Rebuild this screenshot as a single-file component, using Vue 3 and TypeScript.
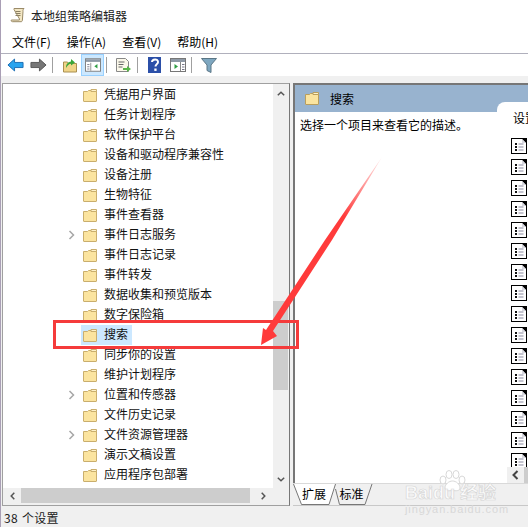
<script setup lang="ts">
interface TreeRow { label: string; expandable?: boolean; selected?: boolean }
const menus: string[] = ['文件(F)', '操作(A)', '查看(V)', '帮助(H)']
const rows: TreeRow[] = [
  { label: '凭据用户界面' },
  { label: '任务计划程序' },
  { label: '软件保护平台' },
  { label: '设备和驱动程序兼容性' },
  { label: '设备注册' },
  { label: '生物特征' },
  { label: '事件查看器' },
  { label: '事件日志服务', expandable: true },
  { label: '事件日志记录' },
  { label: '事件转发' },
  { label: '数据收集和预览版本' },
  { label: '数字保险箱' },
  { label: '搜索', selected: true },
  { label: '同步你的设置' },
  { label: '维护计划程序' },
  { label: '位置和传感器', expandable: true },
  { label: '文件历史记录' },
  { label: '文件资源管理器', expandable: true },
  { label: '演示文稿设置' },
  { label: '应用程序包部署' },
]
const settingIcons: number[] = Array.from({ length: 17 }, (_, i) => i)
</script>

<template>
  <div class="window">
    <header class="title">
      <svg class="title-icon" width="16" height="16" viewBox="0 0 16 16">
        <path d="M4 1.500h10c-1 1-1.200 2-1 3l-.6 8.500c0 1.200-.6 1.700-1.400 1.700H2.500c-1 0-1.500-.7-1.200-1.700h8l.2-1L4 2.500z" fill="#f3e7c4" stroke="#9a8a68" />
        <path d="M5.500 4.500h5M5.500 6.500h5M5.500 8.500h5" stroke="#8c8064" />
      </svg>
      <span>本地组策略编辑器</span>
    </header>

    <nav class="menu">
      <span v-for="m in menus" :key="m" class="menu-item">{{ m }}</span>
    </nav>

    <div class="toolbar">
      <button class="tool tool-nav">
        <svg width="17" height="14" viewBox="0 0 18 14"><path d="M1 7l7-6.300v3.600h9v5.400H8v3.600z" fill="#29a4ef" stroke="#1b6bb0" /></svg>
      </button>
      <button class="tool tool-nav">
        <svg width="17" height="14" viewBox="0 0 18 14"><path d="M17 7l-7-6.300v3.600H1v5.400h9v3.600z" fill="#777" stroke="#555" /></svg>
      </button>
      <i class="sep"></i>
      <button class="tool">
        <svg width="16" height="16" viewBox="0 0 16 16"><path d="M1.500 5h4l1 1.500h8v8.500h-13z" fill="#f0d488" stroke="#a98f50" /><path d="M4 11c0-4 2-6 5-6.500V2l4 3.500-4 3V6.500C7 7 5.500 8.500 4 11z" fill="#3aa63a" /></svg>
      </button>
      <button class="tool tool-active">
        <svg width="16" height="14" viewBox="0 0 18 15"><rect x=".5" y=".5" width="17" height="14" fill="#fff" stroke="#777" /><rect x="1" y="1" width="16" height="3" fill="#8e99a6" /><path d="M6.500 5v9" stroke="#888" /><path d="M2.500 7h2.500M2.500 9.500h2.500M2.500 12h2.500" stroke="#778" /><path d="M14 6.500v5l-3.500-2.500z" fill="#2f9e44" /></svg>
      </button>
      <i class="sep"></i>
      <button class="tool">
        <svg width="17" height="17" viewBox="0 0 17 17"><path d="M1.500 1.500h9l3 3v10h-12z" fill="#fbf8ea" stroke="#888" /><path d="M3.500 5h6M3.500 7.500h5M3.500 10h4" stroke="#666" /><path d="M8 11h4V9l4 3-4 3v-2H8z" fill="#58b548" /></svg>
      </button>
      <i class="sep"></i>
      <button class="tool">
        <svg width="14" height="16" viewBox="0 0 14 16"><rect width="13" height="16" fill="#2b4fa8" /><path d="M4 5c.2-3.500 6-3.500 6 0 0 2-2.500 2.300-2.500 4.500" fill="none" stroke="#fff" stroke-width="2" /><rect x="6.300" y="11.500" width="2.300" height="2.400" fill="#fff" /></svg>
      </button>
      <button class="tool">
        <svg width="16" height="14" viewBox="0 0 16 14"><rect x=".5" y=".5" width="15" height="13" fill="#fff" stroke="#777" /><rect x="1" y="1" width="14" height="3" fill="#8e99a6" /><path d="M10.500 4v9" stroke="#888" /><path d="M12 6.500h2.500M12 9h2.500M12 11.500h2.500" stroke="#778" /><path d="M4.500 6v5l3.500-2.500z" fill="#2f9e44" /></svg>
      </button>
      <i class="sep"></i>
      <button class="tool">
        <svg width="16" height="15" viewBox="0 0 16 15"><path d="M.5.500h15L10 7v7.500L6 12.500V7z" fill="#7ea7c0" stroke="#5b7686" /></svg>
      </button>
    </div>

    <main class="body">
      <section class="tree-pane">
        <div class="tree-top">
          <ul class="tree">
            <li v-for="row in rows" :key="row.label" class="tree-row">
              <span class="chevron">
                <svg v-if="row.expandable" width="7" height="10" viewBox="0 0 7 10"><path d="M1.500 1l4 4-4 4" fill="none" stroke="#a6a6a6" stroke-width="1.500" /></svg>
              </span>
              <span class="row-hit" :class="{ selected: row.selected }">
                <svg class="folder" width="14" height="13" viewBox="0 0 14 13"><path d="M.5 2.500V12a.5.500 0 0 0 .5.500h12a.5.500 0 0 0 .5-.5V1.500h-8l-1 1z" fill="#fbe49f" stroke="#c9ae6d" /><path d="M8 .5h5.500v2H8z" fill="#fff3c8" stroke="#c9ae6d" /></svg>
                <span class="row-text">{{ row.label }}</span>
              </span>
            </li>
          </ul>
          <div class="vscroll">
            <svg class="arrow" width="8" height="5" viewBox="0 0 8 5"><path d="M.8 4.300L4 1.200l3.200 3.100" fill="none" stroke="#555" stroke-width="1.500" /></svg>
            <div class="vtrack"><div class="vthumb"></div></div>
            <svg class="arrow" width="8" height="5" viewBox="0 0 8 5"><path d="M.8.700L4 3.800 7.200.700" fill="none" stroke="#555" stroke-width="1.500" /></svg>
          </div>
        </div>
        <div class="hscroll">
          <svg width="5" height="8" viewBox="0 0 5 8"><path d="M4.300.8L1.200 4l3.100 3.200" fill="none" stroke="#555" stroke-width="1.500" /></svg>
          <div class="htrack"><div class="hthumb"></div></div>
          <svg width="5" height="8" viewBox="0 0 5 8"><path d="M.7.800L3.800 4 .7 7.200" fill="none" stroke="#555" stroke-width="1.500" /></svg>
        </div>
      </section>

      <section class="detail-col">
        <div class="detail">
          <div class="detail-head">
            <svg width="14" height="13" viewBox="0 0 14 13"><path d="M.5 2.500V12a.5.500 0 0 0 .5.500h12a.5.500 0 0 0 .5-.5V1.500h-8l-1 1z" fill="#fbe49f" stroke="#b99e5d" /><path d="M8 .5h5.500v2H8z" fill="#fff3c8" stroke="#b99e5d" /></svg>
            <span>搜索</span>
          </div>
          <div class="detail-main">
            <p class="describe">选择一个项目来查看它的描述。</p>
            <div class="settings">
              <div class="settings-head">设置</div>
              <div class="settings-list">
                <svg v-for="n in settingIcons" :key="n" class="set-icon" width="16" height="16" viewBox="0 0 16 16">
                  <rect width="16" height="16" fill="#000" />
                  <path d="M1 1h10l4 4v10H1z" fill="#fff" />
                  <path d="M11 1v4h4z" fill="#d8d8e0" />
                  <path d="M4 5h2v2H4zM4 8h2v2H4zM4 11h2v2H4z" fill="#111" />
                  <path d="M7.500 6h5M7.500 9h5M7.500 12h5" stroke="#8a8aa0" />
                </svg>
              </div>
              <div class="settings-scroll">
                <svg width="7" height="10" viewBox="0 0 7 10"><path d="M5.500 1L1.500 5l4 4" fill="none" stroke="#444" stroke-width="2" /></svg>
                <i></i>
              </div>
            </div>
          </div>
        </div>
        <div class="tabs">
          <span class="tab tab-active">
            <svg class="tab-shape" width="43" height="21" viewBox="0 0 43 21"><path d="M.5 0L8.500 20.500H36L42.500 0" fill="#fff" stroke="#777" /></svg>
            <span class="tab-label">扩展</span>
          </span>
          <span class="tab tab-second">
            <svg class="tab-shape" width="38" height="21" viewBox="0 0 38 21"><path d="M.5 5L4.500 20.500H30L37 0" fill="#f0f0f0" stroke="#777" /></svg>
            <span class="tab-label">标准</span>
          </span>
        </div>
      </section>
    </main>

    <footer class="status">38 个设置</footer>

    <div class="mark-box"></div>
    <svg class="mark-arrow" width="130" height="195" viewBox="0 0 130 195">
      <defs>
        <linearGradient id="fade" gradientUnits="userSpaceOnUse" x1="124" y1="1" x2="85" y2="60">
          <stop offset="0" stop-color="#ff3b3b" stop-opacity="0.1" />
          <stop offset="1" stop-color="#ff3b3b" />
        </linearGradient>
      </defs>
      <path d="M124 1L74 84 15 175 19 180 3 189 5 172 8 174 67 84z" fill="url(#fade)" />
    </svg>
    <div class="watermark">
      <svg class="paw" width="30" height="22" viewBox="0 0 30 22" fill="#fff" stroke="#d8d8d8">
        <ellipse cx="6" cy="10" rx="3" ry="4" />
        <ellipse cx="12" cy="4.500" rx="3" ry="4" />
        <ellipse cx="19" cy="4.500" rx="3" ry="4" />
        <ellipse cx="25" cy="10" rx="3" ry="4" />
        <path d="M8 18c0-4 4-7 7.500-7s7.500 3 7.500 7c0 3-4 3-7.500 2.500C12 21 8 21 8 18z" />
      </svg>
      <span class="wm-big">Baidu 经验</span>
      <span class="wm-small">jingyan.baidu.com</span>
    </div>
  </div>
</template>

<style scoped>
.window {
  position: relative;
  width: 528px;
  height: 527px;
  display: flex;
  flex-direction: column;
  overflow: hidden;
  background: #f0f0f0;
  color: #000;
  font-family: "Noto Sans CJK SC", "Liberation Sans", sans-serif;
  font-size: 12px;
}
.window::before {
  content: "";
  position: absolute;
  left: 0;
  top: 0;
  bottom: 0;
  width: 1px;
  background: #a99fb5;
}
.title {
  height: 30px;
  background: #fff;
  display: flex;
  align-items: center;
  gap: 5px;
  padding-left: 10px;
  font-size: 12px;
  color: #222;
  box-sizing: border-box;
}
.menu {
  height: 24px;
  box-sizing: border-box;
  background: #fff;
  border-bottom: 1px solid #b0b0bc;
  display: flex;
  align-items: center;
  padding-left: 12px;
  gap: 16px;
}
.menu-item { white-space: nowrap; }
.toolbar {
  height: 22px;
  background: #fff;
  display: flex;
  align-items: center;
  padding-left: 4px;
}
.tool {
  appearance: none;
  border: 1px solid transparent;
  background: none;
  padding: 0;
  width: 23px;
  height: 22px;
  display: flex;
  align-items: center;
  justify-content: center;
  margin: 0;
}
.tool-active {
  background: #cce8ff;
  border-color: #99d1ff;
}
.sep {
  width: 1px;
  height: 16px;
  background: #a0a0a0;
  margin: 0 5px 0 2px;
}
.body {
  flex: 1;
  min-height: 0;
  display: flex;
  padding-top: 7px;
  background: #f0f0f0;
}
.tree-pane {
  margin-left: 2px;
  width: 288px;
  flex: none;
  box-sizing: border-box;
  border: 1px solid #a0a0a0;
  border-right-color: #777;
  display: flex;
  flex-direction: column;
  background: #f0f0f0;
}
.tree-top { flex: 1; min-height: 0; display: flex; }
.tree {
  flex: 1;
  list-style: none;
  margin: 0;
  padding: 1px 0 0;
  background: #fff;
  overflow: hidden;
}
.tree-row {
  height: 20px;
  display: flex;
  align-items: center;
  padding-left: 65px;
}
.chevron {
  width: 13px;
  flex: none;
  display: flex;
  align-items: center;
}
.row-hit {
  display: flex;
  align-items: center;
  height: 20px;
  padding: 0 4px 0 2px;
  gap: 7px;
  box-sizing: border-box;
}
.row-hit.selected { background: #cce8ff; width: 51px; }
.row-text { white-space: nowrap; color: #111; line-height: 18px; padding-bottom: 2px; }
.vscroll {
  width: 16px;
  flex: none;
  display: flex;
  flex-direction: column;
  align-items: center;
  padding: 7px 0 6px;
  box-sizing: border-box;
}
.vtrack { flex: 1; width: 100%; padding-top: 205px; box-sizing: border-box; }
.vthumb { height: 89px; background: #cdcdcd; width: 15px; }
.hscroll {
  height: 17px;
  flex: none;
  display: flex;
  align-items: center;
  padding: 0 23px 2px 7px;
  box-sizing: border-box;
}
.htrack { flex: 1; height: 15px; padding-left: 6px; }
.hthumb { height: 100%; background: #cdcdcd; width: 229px; }
.detail-col {
  flex: 1;
  min-width: 0;
  margin-left: 3px;
  display: flex;
  flex-direction: column;
}
.detail {
  height: 400px;
  flex: none;
  box-sizing: border-box;
  border-left: 2px solid #777;
  border-top: 2px solid #777;
  background: #fff;
  display: flex;
  flex-direction: column;
}
.detail-head {
  height: 27px;
  flex: none;
  background: #98b3cf;
  display: flex;
  align-items: center;
  gap: 11px;
  padding-left: 10px;
  font-size: 12px;
}
.detail-main { flex: 1; min-height: 0; display: flex; }
.describe {
  margin: 0;
  padding: 4px 0 0 5px;
  width: 202px;
  box-sizing: border-box;
  flex: none;
  font-size: 12px;
  line-height: 18px;
  white-space: nowrap;
}
.settings {
  flex: 1;
  min-width: 0;
  background: #fff;
  border-top-left-radius: 8px;
  margin-top: -10px;
  position: relative;
  padding-left: 14px;
  overflow: hidden;
}
.settings-head { height: 36px; line-height: 32px; white-space: nowrap; padding-left: 2px; }
.settings-list { display: flex; flex-direction: column; gap: 5px; }
.set-icon { display: block; flex: none; }
.settings-scroll {
  position: absolute;
  right: 0;
  bottom: 0;
  width: 21px;
  height: 16px;
  background: #f0f0f0;
  display: flex;
  align-items: center;
  justify-content: space-between;
  padding-left: 5px;
  box-sizing: border-box;
}
.settings-scroll i { width: 4px; height: 16px; background: #cdcdcd; }
.tabs {
  height: 21px;
  flex: none;
  display: flex;
  align-items: flex-start;
  border-top: 1px solid #d9d9d9;
  border-bottom: 1px solid #c8c8c8;
  background: #f0f0f0;
}
.tab {
  position: relative;
  width: 42px;
  height: 21px;
  flex: none;
  line-height: 20px;
  text-align: center;
}
.tab-second { width: 38px; }
.tab-shape {
  position: absolute;
  left: 0;
  top: 0;
}
.tab-label {
  position: relative;
  display: block;
}
.tab-second .tab-label { padding-right: 5px; }
.status {
  height: 21px;
  flex: none;
  line-height: 24px;
  padding-left: 4px;
  font-size: 12px;
  word-spacing: 1px;
  letter-spacing: .3px;
  background: #f0f0f0;
  color: #222;
}
.mark-box {
  position: absolute;
  left: 53px;
  top: 320px;
  width: 246px;
  height: 29px;
  box-sizing: border-box;
  border: 3px solid #f53b3b;
  pointer-events: none;
}
.mark-arrow {
  position: absolute;
  left: 258px;
  top: 156px;
  pointer-events: none;
}
.watermark {
  position: absolute;
  left: 405px;
  top: 484px;
  width: 100px;
  display: flex;
  flex-direction: column;
  color: rgba(255, 255, 255, 0.75);
  -webkit-text-stroke: 0.6px #d4d4d4;
  pointer-events: none;
}
.paw {
  position: absolute;
  left: 32px;
  top: -14px;
}
.wm-big {
  position: relative;
  font-family: "Liberation Sans", "Noto Sans CJK SC", sans-serif;
  font-size: 18px;
  font-weight: 700;
  line-height: 19px;
  white-space: nowrap;
}
.wm-small {
  font-family: "Liberation Sans", sans-serif;
  font-size: 11px;
  line-height: 13px;
  letter-spacing: .9px;
  white-space: nowrap;
  -webkit-text-stroke: 0;
  color: #d8d8d8;
}
</style>

<style>
body { margin: 0; }
</style>
